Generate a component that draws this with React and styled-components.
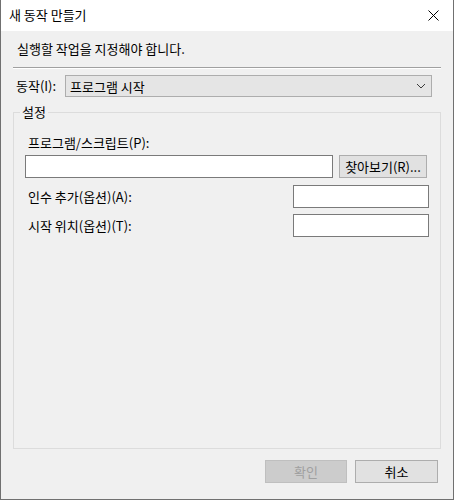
import styled, { createGlobalStyle } from 'styled-components';

const GlobalStyle = createGlobalStyle`
  * { box-sizing: border-box; }
  html, body { margin: 0; padding: 0; background: #f0f0f0; }
  body {
    font-family: 'Noto Sans CJK KR', 'Liberation Sans', sans-serif;
    font-size: 13px;
    color: #000;
  }
`;

const Window = styled.div`
  width: 454px;
  height: 500px;
  display: flex;
  flex-direction: column;
  background: #f0f0f0;
  border: 1px solid #707070;
  border-top: 0;
`;

const TitleBar = styled.div`
  height: 31px;
  flex-shrink: 0;
  display: flex;
  align-items: center;
  justify-content: space-between;
  background: #fff;
  padding: 0 8px 0 8px;
`;

const Title = styled.span`
  line-height: 16px;
  margin-top: -1px;
`;

const CloseButton = styled.button`
  width: 30px;
  height: 30px;
  margin-right: -3px;
  border: 0;
  background: transparent;
  padding: 0;
  display: flex;
  align-items: center;
  justify-content: center;
`;

const Body = styled.div`
  flex: 1;
  display: flex;
  flex-direction: column;
  padding: 0 12px 16px 12px;
`;

const Instruction = styled.p`
  margin: 10px 0 0 0;
  padding-left: 4px;
  line-height: 16px;
`;

const Separator = styled.div`
  margin-top: 10px;
  height: 2px;
  border-top: 1px solid #a0a0a0;
  border-bottom: 1px solid #ffffff;
`;

const ActionRow = styled.div`
  margin-top: 6px;
  display: flex;
  align-items: center;
  justify-content: space-between;
  padding: 0 9px 0 3px;
`;

const Label = styled.label`
  line-height: 16px;
`;

const Combo = styled.div`
  width: 367px;
  height: 22px;
  display: flex;
  align-items: center;
  justify-content: space-between;
  padding: 0 5px 0 4px;
  background: #e5e5e5;
  border: 1px solid #adadad;
`;

const GroupBox = styled.fieldset`
  flex: 1;
  margin: 7px 0 0 0;
  padding: 0 6px 0 6px;
  border: 1px solid #dcdcdc;
  min-width: 0;
`;

const Legend = styled.legend`
  padding: 0 2px;
  line-height: 16px;
`;

const GroupContent = styled.div`
  display: flex;
  flex-direction: column;
  padding: 0 5px 0 5px;
`;

const FieldLabel = styled.div`
  margin-top: 15px;
  padding-left: 3px;
  line-height: 16px;
`;

const PathRow = styled.div`
  margin-top: 4px;
  display: flex;
  align-items: center;
  gap: 6px;
`;

const TextBox = styled.div`
  width: ${(p) => p.$width}px;
  height: 23px;
  flex-shrink: 0;
  background: #fff;
  border: 1px solid #7a7a7a;
`;

const OptionRow = styled.div`
  margin-top: ${(p) => p.$gap}px;
  display: flex;
  align-items: center;
  justify-content: space-between;
  padding-left: 3px;
`;

const Footer = styled.div`
  margin-top: 11px;
  display: flex;
  justify-content: flex-end;
  gap: 8px;
  padding-right: 3px;
`;

const Button = styled.button`
  height: 23px;
  width: ${(p) => p.$width || 82}px;
  padding: 0;
  font-family: inherit;
  font-size: 13px;
  color: ${(p) => (p.disabled ? '#a0a0a0' : '#000')};
  background: ${(p) => (p.disabled ? '#cccccc' : '#e1e1e1')};
  border: 1px solid ${(p) => (p.disabled ? '#bfbfbf' : '#adadad')};
  flex-shrink: 0;
`;

function Chevron() {
  return (
    <svg width="10" height="6" viewBox="0 0 10 6">
      <path d="M1 1 L5 5 L9 1" fill="none" stroke="#3c3c3c" strokeWidth="1" />
    </svg>
  );
}

function CloseIcon() {
  return (
    <svg width="11" height="11" viewBox="0 0 11 11">
      <path d="M0.5 0.5 L10.5 10.5 M10.5 0.5 L0.5 10.5" stroke="#000" strokeWidth="1" />
    </svg>
  );
}

export default function App() {
  return (
    <>
      <GlobalStyle />
      <Window>
        <TitleBar>
          <Title>새 동작 만들기</Title>
          <CloseButton aria-label="닫기">
            <CloseIcon />
          </CloseButton>
        </TitleBar>
        <Body>
          <Instruction>실행할 작업을 지정해야 합니다.</Instruction>
          <Separator />
          <ActionRow>
            <Label>동작(I):</Label>
            <Combo>
              <span>프로그램 시작</span>
              <Chevron />
            </Combo>
          </ActionRow>
          <GroupBox>
            <Legend>설정</Legend>
            <GroupContent>
              <FieldLabel>프로그램/스크립트(P):</FieldLabel>
              <PathRow>
                <TextBox $width={308} />
                <Button $width={88}>찾아보기(R)...</Button>
              </PathRow>
              <OptionRow $gap={7}>
                <Label>인수 추가(옵션)(A):</Label>
                <TextBox $width={136} />
              </OptionRow>
              <OptionRow $gap={6}>
                <Label>시작 위치(옵션)(T):</Label>
                <TextBox $width={136} />
              </OptionRow>
            </GroupContent>
          </GroupBox>
          <Footer>
            <Button disabled>확인</Button>
            <Button $width={83}>취소</Button>
          </Footer>
        </Body>
      </Window>
    </>
  );
}
